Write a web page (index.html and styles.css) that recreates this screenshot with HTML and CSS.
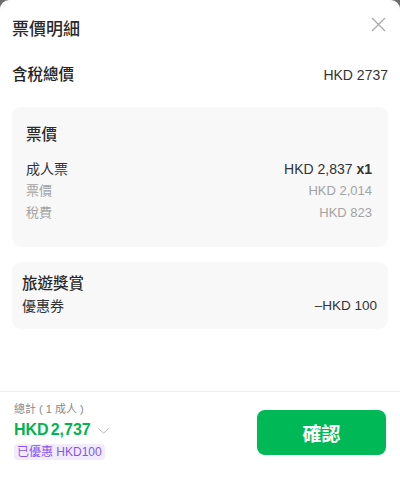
FILE: index.html
```html
<!DOCTYPE html>
<html lang="zh-Hant">
<head>
    <meta charset="UTF-8">
    <meta name="viewport" content="width=device-width, initial-scale=1.0">
    <title>票價明細</title>
    <link rel="stylesheet" href="styles.css">
</head>
<body>
    <div class="sheet">
        <header class="sheet-header">
            <h1>票價明細</h1>
            <button class="close" aria-label="close">
                <svg width="15" height="15" viewBox="0 0 15 15">
                    <path d="M1 1L14 14M14 1L1 14" stroke="#aaa" stroke-width="1.3" fill="none"/>
                </svg>
            </button>
        </header>

        <div class="total-row">
            <span class="total-label">含稅總價</span>
            <span class="total-value">HKD 2737</span>
        </div>

        <section class="card fare">
            <h2>票價</h2>
            <div class="row main">
                <span>成人票</span>
                <span>HKD 2,837 <b>x1</b></span>
            </div>
            <div class="row sub">
                <span>票價</span>
                <span>HKD 2,014</span>
            </div>
            <div class="row sub">
                <span>稅費</span>
                <span>HKD 823</span>
            </div>
        </section>

        <section class="card reward">
            <h2>旅遊獎賞</h2>
            <div class="row main">
                <span>優惠券</span>
                <span class="discount">–HKD 100</span>
            </div>
        </section>

        <div class="spacer"></div>

        <footer class="footer">
            <div class="summary">
                <div class="summary-label">總計 ( 1 成人 )</div>
                <div class="price">
                    HKD<span class="thin"></span>2,737
                    <svg class="chevron" width="11" height="6" viewBox="0 0 11 6">
                        <path d="M0.5 0.5L5.5 5.2L10.5 0.5" stroke="#b5b5b5" stroke-width="1" fill="none"/>
                    </svg>
                </div>
                <span class="badge">已優惠 HKD100</span>
            </div>
            <button class="confirm">確認</button>
        </footer>
    </div>
</body>
</html>
```

FILE: styles.css
```css
body {
    margin: 0;
    background: #6b6b6b;
    font-family: 'Liberation Sans', 'Noto Sans CJK TC', sans-serif;
    color: #222;
}

.sheet {
    background: #fff;
    height: 490px;
    border-radius: 9px 9px 0 0;
    display: flex;
    flex-direction: column;
    overflow: hidden;
}

.sheet-header {
    display: flex;
    justify-content: space-between;
    align-items: flex-start;
    padding: 18px 14px 0 12px;
}

h1 {
    margin: 0;
    font-size: 17px;
    line-height: 24px;
    font-weight: 500;
    color: #2a2a2a;
}

.close {
    background: none;
    border: none;
    padding: 0;
    margin-top: -1px;
    width: 15px;
    height: 15px;
    cursor: pointer;
}

.close svg {
    display: block;
}

.total-row {
    display: flex;
    justify-content: space-between;
    align-items: center;
    margin: 22px 12px 0 12px;
    line-height: 22px;
}

.total-label {
    font-size: 15.5px;
    font-weight: 500;
}

.total-value {
    font-size: 14px;
    color: #333;
}

.card {
    background: #f8f8f8;
    border-radius: 9px;
    margin: 0 12px;
}

.card h2 {
    margin: 0;
    font-size: 15.5px;
    line-height: 22px;
    font-weight: 500;
    color: #2a2a2a;
}

.fare {
    margin-top: 21px;
    padding: 17px 16px 23px 14px;
}

.fare h2 {
    margin-bottom: 12px;
}

.reward {
    margin-top: 15px;
    padding: 11px 11px 12px 10px;
}

.row {
    display: flex;
    justify-content: space-between;
    align-items: center;
    line-height: 22px;
}

.row.main {
    font-size: 14px;
    color: #333;
}

.row.main b {
    font-weight: 700;
}

.row.sub {
    font-size: 13px;
    color: #a3a3a3;
}

.discount {
    font-size: 13.5px;
}

.spacer {
    flex: 1;
}

.footer {
    border-top: 1px solid #f0f0f0;
    display: flex;
    justify-content: space-between;
    align-items: flex-start;
    padding: 9px 14px 30px 14px;
}

.summary-label {
    font-size: 11px;
    line-height: 16px;
    color: #8a8a8a;
}

.price {
    margin-top: 2px;
    font-size: 16px;
    line-height: 22px;
    font-weight: 700;
    color: #00b451;
    display: flex;
    align-items: center;
}

.thin {
    display: inline-block;
    width: 2px;
}

.chevron {
    margin-left: 7px;
    margin-top: 1px;
}

.badge {
    display: inline-block;
    margin-top: 3px;
    padding: 0 3px;
    height: 16px;
    line-height: 16px;
    font-size: 12px;
    color: #8756e8;
    background: #f1ebfd;
    border-radius: 4px;
}

.confirm {
    margin-top: 9px;
    width: 129px;
    height: 45px;
    border: none;
    border-radius: 8px;
    background: #00b956;
    color: #fff;
    font-family: 'Noto Sans CJK TC', sans-serif;
    font-size: 19px;
    font-weight: 700;
    cursor: pointer;
}
```
